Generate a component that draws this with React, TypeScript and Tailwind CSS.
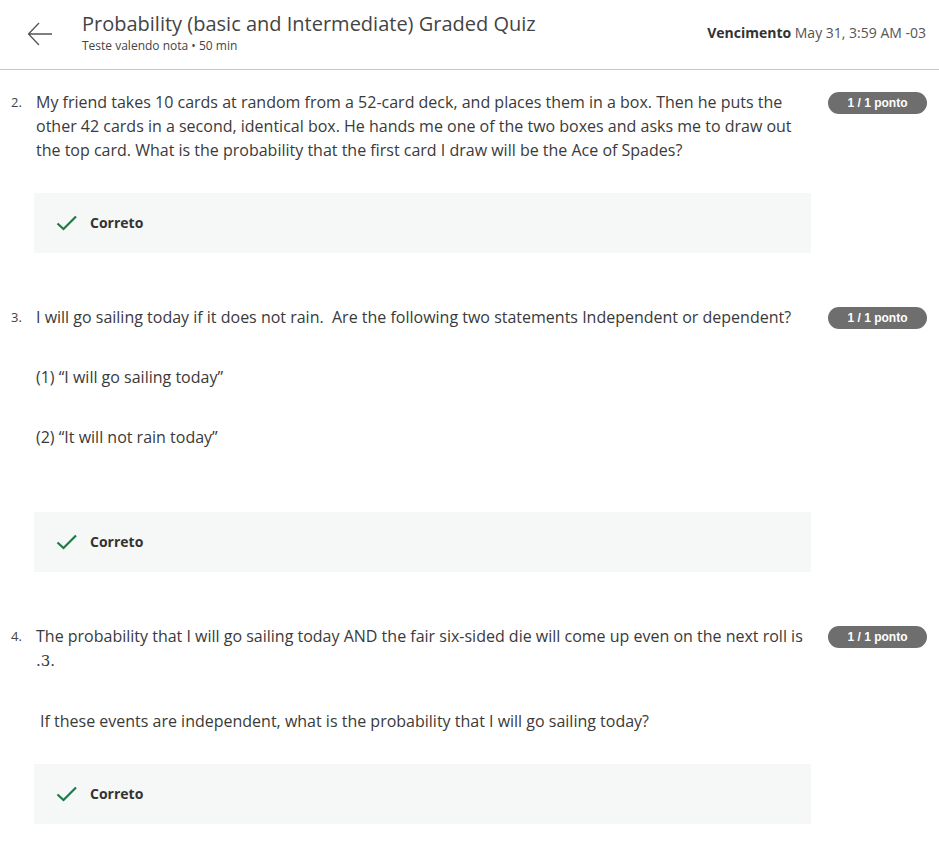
import React from "react";

const Badge = () => (
    <div className="shrink-0 w-[99px] h-[22px] ml-[17px] rounded-full bg-[#6e6e6e] flex items-center justify-center text-white text-[12px] font-bold font-['Liberation_Sans',Arial,sans-serif]">
        1 / 1 ponto
    </div>
);

const Correct = () => (
    <div className="h-[60px] w-[777px] bg-[#f5f8f7] flex items-center pl-[22px]">
        <svg width="22" height="16" viewBox="0 0 22 16" fill="none">
            <path d="M1.5 8.5 L7.5 14 L20 1.5" stroke="#1f7a4a" strokeWidth="2.2" />
        </svg>
        <span className="ml-[12px] text-[14px] font-bold text-[#333]">Correto</span>
    </div>
);

const Question = ({ num, children, answer }: { num: string; children: React.ReactNode; answer: React.ReactNode }) => (
    <div className="flex">
        <div className="w-[34px] shrink-0 pl-[11px] text-[13px] leading-[24px] text-[#444]">{num}</div>
        <div className="w-[777px] shrink-0">
            <div className="pl-[2px]">{children}</div>
            {answer}
        </div>
        <div className="pt-[2px]">
            <Badge />
        </div>
    </div>
);

export default function App() {
    return (
        <div className="min-h-screen bg-white font-['Open_Sans',sans-serif] text-[#3a3a3a]">
            {/* header */}
            <div className="h-[70px] border-b border-[#c8c8c8] flex items-start">
                <button className="ml-[27px] mt-[21px] w-[26px] h-[26px] flex items-center justify-center">
                    <svg width="26" height="24" viewBox="0 0 26 24" fill="none">
                        <path d="M12 1 L1.5 12 L12 23 M1.5 12 H25" stroke="#555" strokeWidth="1.3" />
                    </svg>
                </button>
                <div className="ml-[29px] mt-[10px]">
                    <div className="text-[20px] leading-[28px] text-[#444]">Probability (basic and Intermediate) Graded Quiz</div>
                    <div className="text-[12px] leading-[16px] text-[#444]">Teste valendo nota • 50 min</div>
                </div>
                <div className="ml-auto mr-[13px] mt-[22px] text-[14px] text-[#555]">
                    <span className="font-bold text-[#333]">Vencimento</span> May 31, 3:59 AM -03
                </div>
            </div>

            <div className="pt-[20px] text-[16px] leading-[24px]">
                <Question
                    num="2."
                    answer={<div className="mt-[31px]"><Correct /></div>}
                >
                    <p>
                        My friend takes 10 cards at random from a 52-card deck, and places them in a box. Then he puts the
                        other 42 cards in a second, identical box. He hands me one of the two boxes and asks me to draw out
                        the top card. What is the probability that the first card I draw will be the Ace of Spades?
                    </p>
                </Question>

                <div className="mt-[52px]">
                    <Question
                        num="3."
                        answer={<div className="mt-[63px]"><Correct /></div>}
                    >
                        <p>I will go sailing today if it does not rain.&nbsp; Are the following two statements Independent or dependent?</p>
                        <p className="mt-[36px]">(1) “I will go sailing today”</p>
                        <p className="mt-[36px]">(2) “It will not rain today”</p>
                    </Question>
                </div>

                <div className="mt-[52px] pb-[34px]">
                    <Question
                        num="4."
                        answer={<div className="mt-[31px]"><Correct /></div>}
                    >
                        <p>
                            The probability that I will go sailing today AND the fair six-sided die will come up even on the next roll is{" "}
                            <span className="font-['DejaVu_Serif',serif] text-[15px]">.3.</span>
                        </p>
                        <p className="mt-[36px] pl-[4px]">If these events are independent, what is the probability that I will go sailing today?</p>
                    </Question>
                </div>
            </div>
        </div>
    );
}
